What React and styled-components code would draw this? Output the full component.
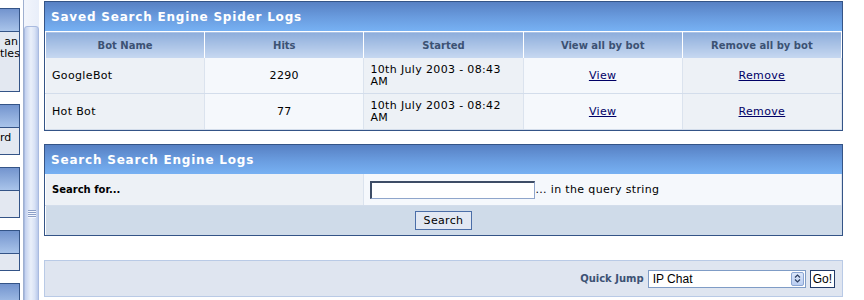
import React from 'react';
import styled, { createGlobalStyle } from 'styled-components';

const GlobalStyle = createGlobalStyle`
  html, body {
    margin: 0;
    padding: 0;
    background: #fff;
  }
  body {
    font-family: Verdana, "DejaVu Sans", sans-serif;
    font-size: 11px;
    color: #000;
    overflow: hidden;
  }
`;

const Page = styled.div`
  display: flex;
  height: 300px;
  overflow: hidden;
`;

/* left menu frame, scrolled so only the right edge shows */
const Sidebar = styled.div`
  width: 20px;
  flex: none;
  padding-top: 8px;
  display: flex;
  flex-direction: column;
  gap: 12px;
  overflow: hidden;
`;

const MenuCard = styled.div`
  flex: none;
  border: 1px solid #345487;
  border-left: none;
`;

const MenuHead = styled.div`
  height: 22px;
  background: linear-gradient(#7394ce, #a9c4ea);
  border-bottom: 1px solid #345487;
`;

const MenuBody = styled.div`
  box-sizing: border-box;
  height: ${p => p.$h}px;
  padding: 4px ${p => p.$pr || 1}px 0 0;
  background: #e3e8f1;
  text-align: right;
  line-height: 12px;
  white-space: nowrap;
`;

const FrameScroll = styled.div`
  width: 24px;
  flex: none;
  padding-left: 3px;
  box-sizing: border-box;
  display: flex;
`;

const Track = styled.div`
  box-sizing: border-box;
  width: 16px;
  border-left: 1px solid #9fb0d0;
  background: linear-gradient(to right, #f2f5fc, #e8eef9);
  padding-top: 26px;
  overflow: hidden;
`;

const Thumb = styled.div`
  box-sizing: border-box;
  height: 380px;
  border: 1px solid #a9bbe0;
  border-radius: 3px 3px 0 0;
  background: linear-gradient(to right, #c3d1ef, #eaf0fa 45%, #d8e2f5 75%, #b9c9ea);
  padding-top: 183px;
`;

const Grip = styled.div`
  width: 8px;
  height: 8px;
  margin: 0 auto;
  background: repeating-linear-gradient(#8c9fc7 0 1px, #f4f7fd 1px 2px);
`;

const Main = styled.main`
  flex: 1;
  min-width: 0;
  padding: 1px 21px 0 0;
`;

const Panel = styled.section`
  border: 1px solid #345487;
  margin-top: ${p => p.$mt || 0}px;
`;

const Title = styled.div`
  height: 29px;
  line-height: 30px;
  padding-left: 6px;
  background: linear-gradient(#5780c3, #6a9de0 55%, #77b1f3);
  color: #fff;
  font-size: 12px;
  font-weight: bold;
  letter-spacing: 0.8px;
`;

const Table = styled.table`
  width: 100%;
  border-collapse: collapse;
  table-layout: fixed;
`;

const Th = styled.th`
  height: 26px;
  padding: 0;
  border-top: 1px solid #fff;
  border-left: 1px solid #fff;
  border-right: 1px solid #fff;
  background: linear-gradient(#8daddb, #c8d9f1);
  color: #3c5274;
  font-size: 10px;
  font-weight: bold;
  text-align: center;
`;

const Td = styled.td`
  height: 35px;
  padding: 0 6px;
  border-left: 1px solid #fff;
  border-right: 1px solid #dbe3ee;
  border-bottom: 1px solid #d3ddeb;
  background: ${p => (p.$alt ? '#f5f8fc' : '#edf1f6')};
  text-align: ${p => (p.$center ? 'center' : 'left')};
  line-height: 12px;
  font-size: ${p => (p.$bold ? 10 : 11)}px;
  font-weight: ${p => (p.$bold ? 'bold' : 'normal')};
  letter-spacing: ${p => (p.$bold ? 0 : 0.35)}px;
`;

const FootCell = styled.td`
  height: 29px;
  padding: 0;
  background: #cfdbe9;
  text-align: center;
`;

const Link = styled.a`
  color: #000066;
  text-decoration: underline;
  cursor: pointer;
`;

const TextInput = styled.input`
  box-sizing: border-box;
  width: 165px;
  height: 18px;
  margin: 0;
  padding: 0 2px;
  vertical-align: middle;
  border-style: solid;
  border-width: 2px 1px 1px 2px;
  border-color: #3e4d66 #8fa5cb #8fa5cb #3e4d66;
  background: #fff;
`;

const Button = styled.button`
  height: 19px;
  margin: 0;
  padding: 0 8px;
  border: 1px solid #4b6ea8;
  background: #e2e8f3;
  font-family: Verdana, "DejaVu Sans", sans-serif;
  font-size: 11px;
  letter-spacing: 0.35px;
  color: #000;
  cursor: pointer;
`;

const JumpBar = styled.div`
  margin-top: 24px;
  height: 35px;
  border: 1px solid #b9cae6;
  background: #dfe5f0;
  display: flex;
  align-items: center;
  justify-content: flex-end;
  gap: 4px;
  padding-right: 7px;
`;

const JumpLabel = styled.span`
  color: #3c5274;
  font-weight: bold;
  font-size: 10px;
`;

const SelectBox = styled.div`
  box-sizing: border-box;
  width: 158px;
  height: 18px;
  border: 1px solid #7f9cc6;
  background: #fff;
  display: flex;
  align-items: center;
  justify-content: space-between;
  padding: 0 1px 0 4px;
  font-family: "Liberation Sans", Arial, sans-serif;
  font-size: 12px;
`;

const SelectArrow = styled.span`
  box-sizing: border-box;
  width: 13px;
  height: 14px;
  border: 1px solid #8ba5d2;
  border-radius: 2px;
  background: linear-gradient(#dbe6fa, #b9cdf1);
  display: flex;
  align-items: center;
  justify-content: center;
`;

const GoButton = styled.button`
  box-sizing: border-box;
  height: 18px;
  margin: 0;
  padding: 0 2px;
  border: 1px solid #213a68;
  background: #fff;
  font-family: "Liberation Sans", Arial, sans-serif;
  font-size: 12px;
  color: #000;
`;

const logs = [
  { bot: 'GoogleBot', hits: 2290, started: '10th July 2003 - 08:43 AM' },
  { bot: 'Hot Bot', hits: 77, started: '10th July 2003 - 08:42 AM' },
];

const App = () => (
  <>
    <GlobalStyle />
    <Page>
      <Sidebar>
        <MenuCard>
          <MenuHead />
          <MenuBody $h={59}>
            an
            <br />
            tles
          </MenuBody>
        </MenuCard>
        <MenuCard>
          <MenuHead />
          <MenuBody $h={26} $pr={11}>rd</MenuBody>
        </MenuCard>
        <MenuCard>
          <MenuHead />
          <MenuBody $h={26} />
        </MenuCard>
        <MenuCard>
          <MenuHead />
          <MenuBody $h={16} />
        </MenuCard>
        <MenuCard>
          <MenuHead />
        </MenuCard>
      </Sidebar>

      <FrameScroll>
        <Track>
          <Thumb>
            <Grip />
          </Thumb>
        </Track>
      </FrameScroll>

      <Main>
        <Panel>
          <Title>Saved Search Engine Spider Logs</Title>
          <Table>
            <thead>
              <tr>
                <Th>Bot Name</Th>
                <Th>Hits</Th>
                <Th>Started</Th>
                <Th>View all by bot</Th>
                <Th>Remove all by bot</Th>
              </tr>
            </thead>
            <tbody>
              {logs.map(row => (
                <tr key={row.bot}>
                  <Td>{row.bot}</Td>
                  <Td $alt $center>{row.hits}</Td>
                  <Td>{row.started}</Td>
                  <Td $alt $center><Link>View</Link></Td>
                  <Td $center><Link>Remove</Link></Td>
                </tr>
              ))}
            </tbody>
          </Table>
        </Panel>

        <Panel $mt={13}>
          <Title>Search Search Engine Logs</Title>
          <Table>
            <colgroup>
              <col style={{ width: '40%' }} />
              <col style={{ width: '60%' }} />
            </colgroup>
            <tbody>
              <tr>
                <Td $bold style={{ height: 31 }}>Search for...</Td>
                <Td $alt style={{ height: 31 }}>
                  <TextInput type="text" />... in the query string
                </Td>
              </tr>
              <tr>
                <FootCell colSpan={2}>
                  <Button>Search</Button>
                </FootCell>
              </tr>
            </tbody>
          </Table>
        </Panel>

        <JumpBar>
          <JumpLabel>Quick Jump</JumpLabel>
          <SelectBox>
            IP Chat
            <SelectArrow>
              <svg width="7" height="9" viewBox="0 0 7 9">
                <path d="M1 3.5 L3.5 1 L6 3.5 M1 5.5 L3.5 8 L6 5.5" fill="none" stroke="#2d3e60" strokeWidth="1.2" />
              </svg>
            </SelectArrow>
          </SelectBox>
          <GoButton>Go!</GoButton>
        </JumpBar>
      </Main>
    </Page>
  </>
);

export default App;
